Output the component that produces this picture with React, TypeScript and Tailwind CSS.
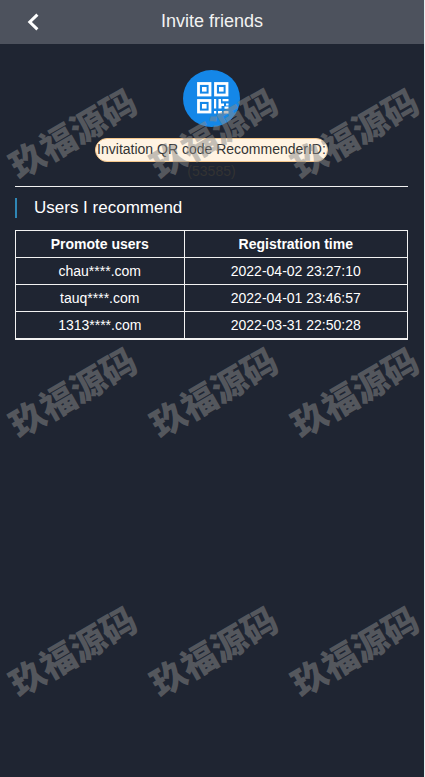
const users = [
  { name: "chau****.com", time: "2022-04-02 23:27:10" },
  { name: "tauq****.com", time: "2022-04-01 23:46:57" },
  { name: "1313****.com", time: "2022-03-31 22:50:28" },
];

const Header = () => (
  <header className="relative flex h-11 items-center justify-center bg-[#4d525d]">
    <button type="button" aria-label="Back" className="absolute left-6 top-3 flex h-5 w-5 items-center justify-center">
      <svg viewBox="0 0 20 20" className="h-5 w-5" fill="none" stroke="#fff" strokeWidth="3">
        <path d="M13.4 2.6 L5.8 10 L13.4 17.4" />
      </svg>
    </button>
    <h1 className="pb-0.5 text-lg leading-6 text-[#f2f2f2]">Invite friends</h1>
  </header>
);

const QrIcon = () => (
  <svg viewBox="0 0 57 57" className="h-[57px] w-[57px]" aria-hidden="true">
    <circle cx="28.5" cy="28.5" r="28.5" fill="#1487e8" />
    <g fill="none" stroke="#fff" strokeWidth="2.8">
      <rect x="15.5" y="13.5" width="11.5" height="11.5" />
      <rect x="32.5" y="13.5" width="11.5" height="11.5" />
      <rect x="15.5" y="30.5" width="11.5" height="11.5" />
    </g>
    <g fill="#fff">
      <rect x="19" y="17" width="4.6" height="4.6" />
      <rect x="36" y="17" width="4.6" height="4.6" />
      <rect x="19" y="34" width="4.6" height="4.6" />
      <path d="M31 29h2.2v9.5h-2.2zM31 41h2.2v2.5h-2.2zM35.5 29h2.5v4.5h3v2.5h-2.5v2.5h-3zM39.5 29h6v2.2h-6zM43 33.5h2.5v2h-2.5zM41.5 36.5h4v2.2h-4zM35 41h4v2.4h-4zM40.8 41h4.7v2.4h-4.7z" />
    </g>
  </svg>
);

const Watermark = () => (
  <div
    aria-hidden="true"
    className="pointer-events-none absolute inset-0 grid auto-rows-[259px] grid-cols-3 overflow-hidden pt-0.5 pl-0.5"
  >
    {Array.from({ length: 9 }, (_, i) => (
      <div key={i} className="flex items-center justify-center">
        <span className="-rotate-30 whitespace-nowrap font-['Noto_Sans_CJK_SC',sans-serif] text-[35px] font-black leading-10 text-[#898989]/50">
          玖福源码
        </span>
      </div>
    ))}
  </div>
);

const App = () => {
  return (
    <div className="relative min-h-screen overflow-hidden border-r border-[#e8f0f2] bg-[#1f2532] font-['Liberation_Sans',Arial,sans-serif] text-white">
      <Header />

      <main className="pl-[15px] pr-4 pt-[26px]">
        <section className="flex flex-col items-center border-b border-[#f2f2f2] pb-[5px] text-sm text-[#333]">
          <QrIcon />
          <p className="mt-[11px] flex h-6 items-center rounded-full border border-[#f5c78c] bg-[#fff3e2] px-px pb-0.5">
            Invitation QR code RecommenderID:
          </p>
          <p className="leading-[19px]">(53585)</p>
        </section>

        <section>
          <h2 className="mt-[11px] flex h-5 items-center border-l-2 border-[#2f86b5] pl-[17px] text-[17px]">
            Users I recommend
          </h2>
          <table className="mt-3 w-full table-fixed border-collapse border border-b-2 border-[#f2f2f2] text-center text-sm leading-[26px]">
            <thead>
              <tr>
                <th className="w-[43%] border border-[#f2f2f2] font-bold">Promote users</th>
                <th className="border border-[#f2f2f2] font-bold">Registration time</th>
              </tr>
            </thead>
            <tbody>
              {users.map((user) => (
                <tr key={user.name}>
                  <td className="border border-[#f2f2f2]">{user.name}</td>
                  <td className="border border-[#f2f2f2]">{user.time}</td>
                </tr>
              ))}
            </tbody>
          </table>
        </section>
      </main>

      <Watermark />
    </div>
  );
};

export default App;
